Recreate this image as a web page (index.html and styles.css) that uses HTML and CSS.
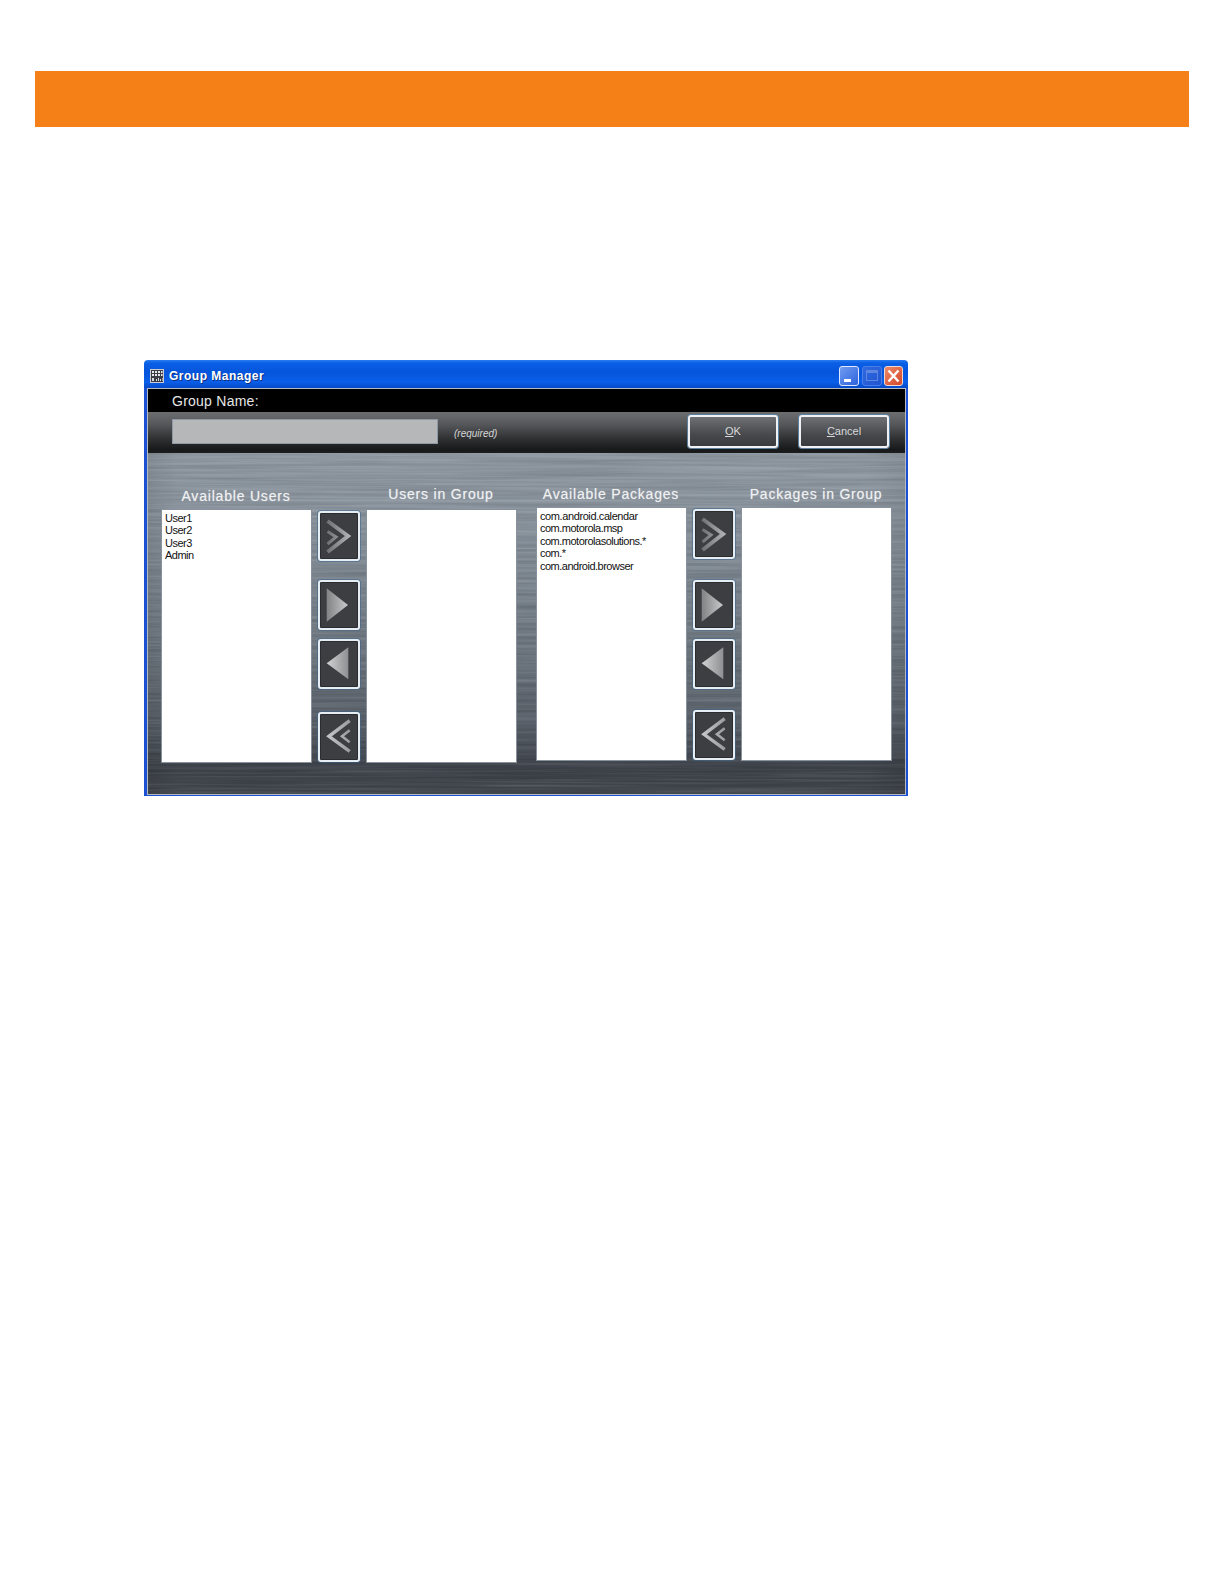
FILE: index.html
```html
<!DOCTYPE html>
<html>

<head>
    <title>Group Manager</title>
    <link rel="stylesheet" href="styles.css">
</head>

<body>

    <div class="top-bar"></div>

    <svg class="icon-defs" aria-hidden="true">
        <defs>
            <linearGradient id="arrowGrey" x1="0" y1="0" x2="1" y2="0">
                <stop offset="0" stop-color="#818284" />
                <stop offset="1" stop-color="#c9cacb" />
            </linearGradient>
            <linearGradient id="arrowGreyBack" x1="0" y1="0" x2="1" y2="0">
                <stop offset="0" stop-color="#d2d3d4" />
                <stop offset="1" stop-color="#8e8f92" />
            </linearGradient>
            <linearGradient id="chevGrey" gradientUnits="userSpaceOnUse" x1="9" y1="0" x2="32" y2="0">
                <stop offset="0" stop-color="#6f7073" />
                <stop offset="1" stop-color="#b2b3b5" />
            </linearGradient>
            <linearGradient id="chevGreyBack" gradientUnits="userSpaceOnUse" x1="10" y1="0" x2="32" y2="0">
                <stop offset="0" stop-color="#c4c5c7" />
                <stop offset="1" stop-color="#9a9b9e" />
            </linearGradient>
            <filter id="brushed" x="0" y="0" width="100%" height="100%">
                <feTurbulence type="fractalNoise" baseFrequency="0.004 0.45" numOctaves="3" seed="7" />
                <feColorMatrix type="matrix" values="0 0 0 0 1  0 0 0 0 1  0 0 0 0 1  1.6 0 0 0 -0.55" />
            </filter>
            <filter id="brushedDark" x="0" y="0" width="100%" height="100%">
                <feTurbulence type="fractalNoise" baseFrequency="0.006 0.3" numOctaves="3" seed="21" />
                <feColorMatrix type="matrix" values="0 0 0 0 0  0 0 0 0 0  0 0 0 0 0  1.6 0 0 0 -0.55" />
            </filter>
            <symbol id="addAll" viewBox="0 0 42 50">
                <path d="M9.5 10 L30 25 L9.5 41" fill="none" stroke="url(#chevGrey)" stroke-width="4" />
                <path d="M9.5 20.5 L18 26 L9.5 33" fill="none" stroke="url(#chevGrey)" stroke-width="3" />
            </symbol>
            <symbol id="addOne" viewBox="0 0 42 50">
                <path d="M8.7 8.3 L30 25 L8.7 41.7 Z" fill="url(#arrowGrey)" />
            </symbol>
            <symbol id="removeOne" viewBox="0 0 42 50">
                <path d="M30.3 8.3 L8.7 24.3 L30.3 40.3 Z" fill="url(#arrowGreyBack)" />
            </symbol>
            <symbol id="removeAll" viewBox="0 0 42 50">
                <path d="M31.7 8.7 L11 24.3 L31.7 39.3" fill="none" stroke="url(#chevGreyBack)" stroke-width="3.4" />
                <path d="M31.7 18.3 L24 24.3 L31.7 30.3" fill="none" stroke="url(#chevGreyBack)" stroke-width="2.6" />
            </symbol>
        </defs>
    </svg>

    <div class="window">
        <div class="titlebar">
            <svg class="app-icon" viewBox="0 0 14 14">
                <rect width="14" height="14" fill="#c9ccd2" />
                <rect x="1" y="1" width="12" height="12" fill="#3a3d44" />
                <path d="M2 2h2v2H2zM5 2h2v2H5zM8 2h2v2H8zM11 2h1.5v2H11zM2 5h2v2H2zM5 5h2v2H5zM8 5h2v2H8zM11 5h1.5v2H11z" fill="#e6e8ec" />
                <path d="M2 9h2v3H2zM6 10h1v2H6zM8 9h1v3H8zM10 10h1v2h-1zM12 9h.6v3H12z" fill="#d6dae0" />
            </svg>
            <span class="title-text">Group Manager</span>
            <div class="win-controls">
                <div class="win-btn win-min"><span class="min-glyph"></span></div>
                <div class="win-btn win-max"><span class="max-glyph"></span></div>
                <div class="win-btn win-close">
                    <svg viewBox="0 0 19 20" width="19" height="20">
                        <path d="M4.5 4.5 L14.5 15.5 M14.5 4.5 L4.5 15.5" stroke="#fff" stroke-width="2.4" fill="none" />
                    </svg>
                </div>
            </div>
        </div>
        <div class="window-frame">
            <div class="client">
                <div class="name-bar">Group Name:</div>
                <div class="tool-bar">
                    <div class="name-input"></div>
                    <span class="required">(required)</span>
                    <div class="tool-btn tool-btn-ok"><span><u>O</u>K</span></div>
                    <div class="tool-btn"><span><u>C</u>ancel</span></div>
                </div>
                <div class="panel">
                    <svg class="panel-texture" aria-hidden="true">
                        <rect width="100%" height="100%" filter="url(#brushed)" />
                        <rect width="100%" height="100%" filter="url(#brushedDark)" />
                    </svg>
                    <div class="picker picker-users">
                        <div class="col">
                            <div class="col-title">Available Users</div>
                            <ul class="list">
                                <li>User1</li>
                                <li>User2</li>
                                <li>User3</li>
                                <li>Admin</li>
                            </ul>
                        </div>
                        <div class="arrows">
                            <div class="arrow-btn"><svg><use href="#addAll" /></svg></div>
                            <div class="arrow-btn arrow-far"><svg><use href="#addOne" /></svg></div>
                            <div class="arrow-btn"><svg><use href="#removeOne" /></svg></div>
                            <div class="arrow-btn arrow-far-end"><svg><use href="#removeAll" /></svg></div>
                        </div>
                        <div class="col">
                            <div class="col-title col-title-raised">Users in Group</div>
                            <ul class="list"></ul>
                        </div>
                    </div>
                    <div class="picker picker-packages">
                        <div class="col">
                            <div class="col-title">Available Packages</div>
                            <ul class="list">
                                <li class="loose">com.android.calendar</li>
                                <li>com.motorola.msp</li>
                                <li>com.motorolasolutions.*</li>
                                <li>com.*</li>
                                <li>com.android.browser</li>
                            </ul>
                        </div>
                        <div class="arrows">
                            <div class="arrow-btn"><svg><use href="#addAll" /></svg></div>
                            <div class="arrow-btn arrow-far"><svg><use href="#addOne" /></svg></div>
                            <div class="arrow-btn"><svg><use href="#removeOne" /></svg></div>
                            <div class="arrow-btn arrow-far-end"><svg><use href="#removeAll" /></svg></div>
                        </div>
                        <div class="col">
                            <div class="col-title">Packages in Group</div>
                            <ul class="list"></ul>
                        </div>
                    </div>
                </div>
            </div>
        </div>
    </div>

</body>

</html>
```

FILE: styles.css
```css
body {
    margin: 0;
    background: #fff;
    font-family: "Liberation Sans", Arial, sans-serif;
}

.top-bar {
    width: 1154px;
    height: 56px;
    margin: 71px 0 0 35px;
    background: #f58017;
}

.icon-defs {
    position: absolute;
    width: 0;
    height: 0;
}

/* window */
.window {
    width: 764px;
    height: 436px;
    margin: 233px 0 0 144px;
    box-sizing: border-box;
}

.titlebar {
    height: 28px;
    box-sizing: border-box;
    display: flex;
    align-items: center;
    padding: 3px 5px 0 6px;
    border-radius: 4px 4px 0 0;
    background: linear-gradient(#2b7df0 0, #0a5fe6 3px, #0555dc 12px, #0a5ee8 22px, #0549c8 28px);
}

.app-icon {
    width: 14px;
    height: 14px;
    flex-shrink: 0;
}

.title-text {
    margin-left: 5px;
    font-size: 12px;
    font-weight: bold;
    letter-spacing: .5px;
    color: #fff;
    text-shadow: 1px 1px 0 #0a2f80;
}

.win-controls {
    margin-left: auto;
    display: flex;
    gap: 3px;
}

.win-btn {
    width: 20px;
    height: 20px;
    box-sizing: border-box;
    border: 1px solid #dfe8fb;
    border-radius: 3px;
    position: relative;
    background: linear-gradient(135deg, #6f9cf2, #2e62dc);
}

.win-max {
    border-color: #4a7ee6;
    background: linear-gradient(135deg, #2f6ae2, #1f55d0);
}

.win-close {
    width: 19px;
    margin-left: -1px;
    border-color: #f1d8d0;
    background: linear-gradient(135deg, #ec8a68, #d5482a);
    overflow: hidden;
}

.win-close svg {
    position: absolute;
    left: -1px;
    top: -1px;
}

.min-glyph {
    position: absolute;
    left: 4px;
    bottom: 3px;
    width: 7px;
    height: 3px;
    background: #fff;
}

.max-glyph {
    position: absolute;
    left: 3px;
    top: 3px;
    width: 12px;
    height: 11px;
    box-sizing: border-box;
    border: 1px solid #5c86e0;
    border-top-width: 3px;
}

.window-frame {
    height: 408px;
    box-sizing: border-box;
    border-style: solid;
    border-color: #1c50d2;
    border-width: 0 2px 1px 3px;
}

.client {
    height: 100%;
    box-sizing: border-box;
    border: 1px solid #b3bac2;
    display: flex;
    flex-direction: column;
}

.name-bar {
    height: 23px;
    line-height: 25px;
    padding-left: 24px;
    background: #000;
    color: #e6e6e6;
    font-size: 14px;
    letter-spacing: .25px;
}

/* toolbar under the name */
.tool-bar {
    height: 41px;
    box-sizing: border-box;
    display: flex;
    align-items: center;
    padding: 0 16px 2px 24px;
    background: linear-gradient(#6c6e70 0, #55575a 30%, #333436 62%, #18191a 92%, #1c1d1e 100%);
}

.name-input {
    width: 266px;
    height: 25px;
    box-sizing: border-box;
    background: #b6b7b8;
    border: 1px solid #8d99a6;
}

.required {
    margin-left: 16px;
    margin-top: 4px;
    font-size: 10px;
    font-style: italic;
    color: #d6d6d6;
}

.tool-btn {
    width: 90px;
    height: 33px;
    margin-left: 21px;
    box-sizing: border-box;
    display: flex;
    align-items: center;
    justify-content: center;
    padding-bottom: 2px;
    font-size: 11px;
    color: #d8dadc;
    border: 2px solid #eef2f4;
    border-radius: 3px;
    box-shadow: 0 0 0 1px #5d7f9c;
    background: linear-gradient(#6e7073, #47494c 60%, #3a3b3e);
}

.tool-btn-ok {
    margin-left: auto;
}

/* brushed metal panel */
.panel {
    flex: 1;
    position: relative;
    display: flex;
    gap: 19px;
    align-items: flex-start;
    padding: 27px 0 0 13px;
    background:
        linear-gradient(90deg, rgba(0, 0, 0, .08), transparent 4%, transparent 95%, rgba(0, 0, 0, .06)),
        linear-gradient(#8f98a1 0, #89939d 18%, #7a848e 40%, #69727b 62%, #565d66 80%, #3c4149 93%, #41464d 100%);
}

.panel-texture {
    position: absolute;
    left: 0;
    top: 0;
    width: 100%;
    height: 100%;
    opacity: .14;
}

.picker {
    position: relative;
    display: flex;
    gap: 6px;
}

.picker-users {
    margin-top: 2px;
}

.col {
    width: 151px;
}

.col-title {
    height: 27px;
    box-sizing: border-box;
    display: flex;
    align-items: center;
    justify-content: center;
    padding-right: 1px;
    font-size: 14px;
    letter-spacing: .8px;
    white-space: nowrap;
    color: #f0f1f2;
    text-shadow: 0 0 1px rgba(255, 255, 255, .45);
}

.col-title-raised {
    padding-bottom: 3px;
}

.list {
    list-style: none;
    margin: 0;
    padding: 2px 0 0 3px;
    height: 254px;
    box-sizing: border-box;
    background: #fff;
    border: 1px solid #87929d;
    font-size: 11px;
    line-height: 12.4px;
    letter-spacing: -.5px;
    color: #111;
}

.loose {
    letter-spacing: -.4px;
}

/* arrow buttons between the lists */
.arrows {
    width: 42px;
    padding-top: 29px;
    display: flex;
    flex-direction: column;
    gap: 9px;
}

.arrow-btn {
    width: 42px;
    height: 50px;
    box-sizing: border-box;
    border: 2px solid #e6eef3;
    border-radius: 3px;
    box-shadow: 0 0 0 1px rgba(60, 100, 140, .55), inset 0 0 0 1px #2a2c30;
    background: #3d3e42;
    overflow: hidden;
}

.arrow-btn svg {
    display: block;
    width: 42px;
    height: 50px;
    margin: -2px;
}

.picker-users .arrow-far {
    margin-top: 10px;
}

.picker-users .arrow-far-end {
    margin-top: 14px;
}

.picker-packages .arrow-far {
    margin-top: 12px;
}

.picker-packages .arrow-far-end {
    margin-top: 12px;
}
```
